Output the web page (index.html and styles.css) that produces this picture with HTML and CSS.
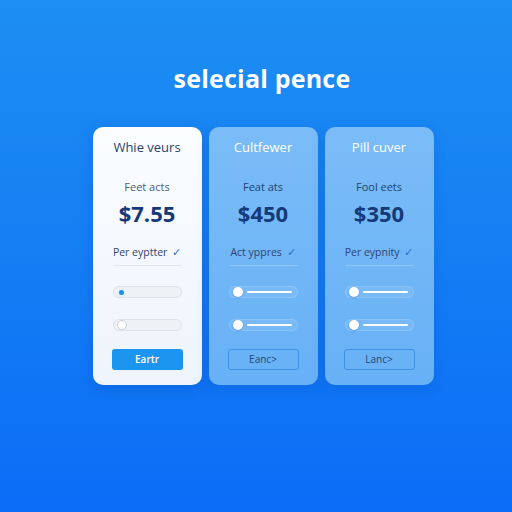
FILE: index.html
```html
<!DOCTYPE html>
<html lang="en">
<head>
    <meta charset="UTF-8">
    <meta name="viewport" content="width=device-width, initial-scale=1.0">
    <title>Pricing</title>
    <link rel="stylesheet" href="styles.css">
</head>
<body>
    <section class="pricing-section">
        <h1 class="pricing-title">selecial pence</h1>
        <div class="card-wrapper">
            <div class="card-container card-light">
                <div class="plan-name">Whie veurs</div>
                <div class="plan-label">Feet acts</div>
                <div class="plan-price">$7.55</div>
                <div class="plan-term">Per eyptter <span class="check">&#10003;</span></div>
                <div class="divider"></div>
                <div class="slider slider-dot"><span class="knob"></span></div>
                <div class="slider slider-empty"><span class="knob"></span></div>
                <a href="#" class="plan-btn btn-filled">Eartr</a>
            </div>
            <div class="card-container card-blue">
                <div class="plan-name">Cultfewer</div>
                <div class="plan-label">Feat ats</div>
                <div class="plan-price">$450</div>
                <div class="plan-term">Act yppres <span class="check">&#10003;</span></div>
                <div class="divider"></div>
                <div class="slider slider-line"><span class="knob"></span><span class="line"></span></div>
                <div class="slider slider-line"><span class="knob"></span><span class="line"></span></div>
                <a href="#" class="plan-btn btn-outline">Eanc&gt;</a>
            </div>
            <div class="card-container card-blue">
                <div class="plan-name">Pill cuver</div>
                <div class="plan-label">Fool eets</div>
                <div class="plan-price">$350</div>
                <div class="plan-term">Per eypnity <span class="check">&#10003;</span></div>
                <div class="divider"></div>
                <div class="slider slider-line"><span class="knob"></span><span class="line"></span></div>
                <div class="slider slider-line"><span class="knob"></span><span class="line"></span></div>
                <a href="#" class="plan-btn btn-outline">Lanc&gt;</a>
            </div>
        </div>
    </section>
</body>
</html>
```

FILE: styles.css
```css
*,::after,::before{
    padding: 0;
    margin: 0;
    box-sizing: border-box;
}

body{
    font-family: 'Open Sans', sans-serif;
    width: 512px;
    height: 512px;
    overflow: hidden;
    background: linear-gradient(180deg, #1d8ef3 0%, #1580f3 45%, #0b6cf7 100%);
}

a{
    text-decoration: none;
    display: block;
}

.pricing-section{
    display: flex;
    flex-direction: column;
    align-items: center;
    padding-top: 61px;
}

.pricing-title{
    color: white;
    font-size: 25px;
    font-weight: 700;
    line-height: 34px;
    letter-spacing: 0.2px;
    margin-left: 12px;
}

.card-wrapper{
    display: flex;
    gap: 7px;
    margin-top: 32px;
    margin-left: 14px;
}

.card-container{
    width: 109px;
    height: 258px;
    border-radius: 10px;
    padding: 12px 20px 0;
    display: flex;
    flex-direction: column;
    align-items: center;
    text-align: center;
}

.card-light{
    background: linear-gradient(180deg, #fbfdff 0%, #eef4fc 100%);
    box-shadow: 0 4px 14px rgba(10, 60, 160, 0.25);
}

.card-blue{
    background: linear-gradient(180deg, #7abcf7 0%, #68b1f6 100%);
    box-shadow: 0 4px 14px rgba(10, 60, 160, 0.18);
}

.plan-name{
    font-size: 13px;
    line-height: 16px;
    color: #2c416b;
}

.card-blue .plan-name{
    color: white;
    font-weight: 500;
}

.plan-label{
    margin-top: 25px;
    font-size: 11px;
    line-height: 14px;
    color: #4a5d7e;
}

.card-blue .plan-label{
    color: #23426f;
}

.plan-price{
    margin-top: 6px;
    font-size: 22px;
    line-height: 26px;
    font-weight: 700;
    color: #143a77;
}

.plan-term{
    margin-top: 19px;
    font-size: 10.5px;
    line-height: 14px;
    color: #2f4470;
    white-space: nowrap;
}

.check{
    color: #2a6fd0;
    margin-left: 2px;
}

.divider{
    width: 69px;
    height: 1px;
    margin-top: 6px;
    background: #dfe6ef;
}

.card-blue .divider{
    background: rgba(255, 255, 255, 0.22);
}

.slider{
    width: 69px;
    height: 12px;
    border-radius: 6px;
    margin-top: 20px;
    display: flex;
    align-items: center;
    padding: 0 3px;
    gap: 4px;
}

.slider + .slider{
    margin-top: 21px;
}

.slider-dot,
.slider-empty{
    background: #eef2f7;
    border: 1px solid #dbe2ec;
}

.knob{
    width: 10px;
    height: 10px;
    border-radius: 50%;
    flex-shrink: 0;
}

.slider-dot .knob{
    background: #1c8fe0;
    border: 2px solid #e4eef9;
    width: 9px;
    height: 9px;
}

.slider-empty .knob{
    background: white;
    border: 1px solid #c9d3e0;
}

.slider-line{
    background: rgba(255, 255, 255, 0.08);
    border: 1px solid rgba(255, 255, 255, 0.14);
}

.slider-line .knob{
    background: white;
    box-shadow: 0 1px 2px rgba(20, 70, 160, 0.3);
}

.slider-line .line{
    flex: 1;
    height: 2px;
    border-radius: 1px;
    background: white;
    margin-right: 2px;
}

.plan-btn{
    width: 71px;
    height: 21px;
    margin-top: 18px;
    border-radius: 3px;
    font-size: 10px;
    line-height: 21px;
    text-align: center;
}

.btn-filled{
    background: #1b95ef;
    color: white;
    font-weight: 600;
}

.btn-outline{
    border: 1px solid #3f8fe2;
    line-height: 19px;
    color: #24467a;
}
```
